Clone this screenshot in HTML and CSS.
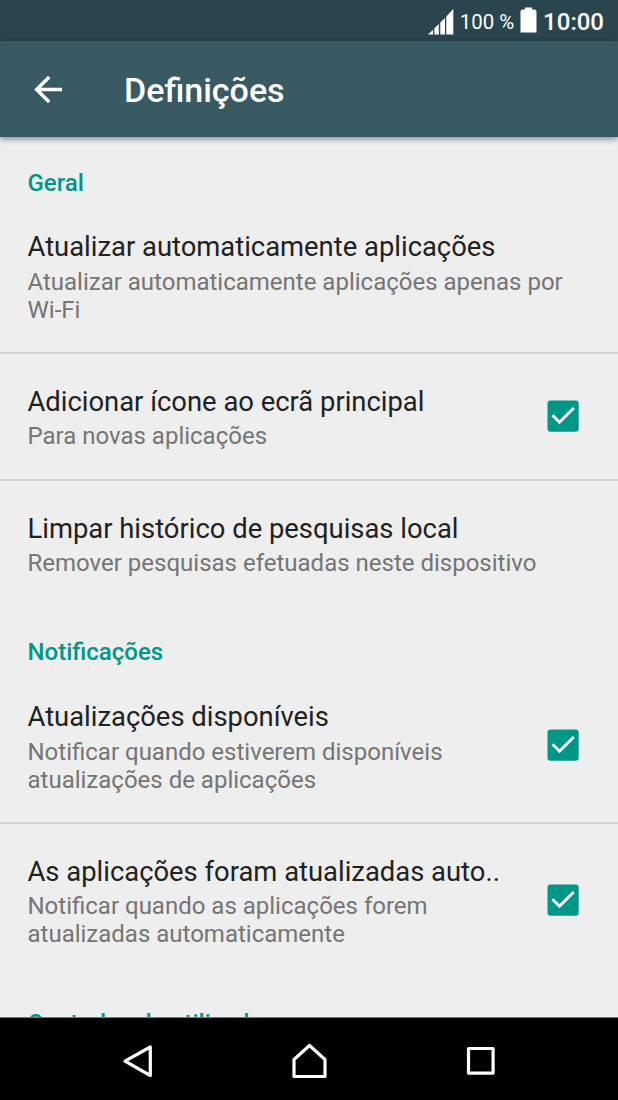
FILE: index.html
```html
<!DOCTYPE html>
<html lang="pt">
<head>
<meta charset="utf-8">
<title>Definições</title>
<link rel="stylesheet" href="styles.css">
</head>
<body>
<div class="screen">
  <div class="status">
    <svg class="signal" width="26" height="26" viewBox="0 0 26 26"><path d="M0 25.500L5 20.800v4.700zM6.300 25.500v-6L10.800 15v10.500zM12.300 25.500v-12L17 9v16.500zM18.300 25.500v-18L25.300 0v25.500z"/></svg>
    <span class="percent">100 %</span>
    <svg class="battery" width="17" height="26" viewBox="0 0 17 26"><path d="M5 .5h7v2h3l1.500 1.500v21.500H0.500V4L2 2.500h3z"/></svg>
    <span class="clock">10:00</span>
  </div>
  <header class="toolbar">
    <svg class="back" width="28" height="28" viewBox="0 0 28 28"><path d="M28 14.500H3M15.200 2L2.700 14.500 15.200 27"/></svg>
    <h1 class="title">Definições</h1>
  </header>
  <main class="content">
    <h2 class="section">Geral</h2>
    <div class="row first"><div class="text"><div class="name">Atualizar automaticamente aplicações</div><div class="desc">Atualizar automaticamente aplicações apenas por<br>Wi-Fi</div></div></div>
    <div class="row ruled"><div class="text"><div class="name">Adicionar ícone ao ecrã principal</div><div class="desc">Para novas aplicações</div></div>
      <svg class="check" width="32" height="32" viewBox="0 0 32 32"><rect x=".5" y=".5" width="31.200" height="31.200" rx="3"/><path d="M5.500 15.200l7 7L26.800 8"/></svg></div>
    <div class="row ruled"><div class="text"><div class="name">Limpar histórico de pesquisas local</div><div class="desc">Remover pesquisas efetuadas neste dispositivo</div></div></div>
    <h2 class="section later">Notificações</h2>
    <div class="row second"><div class="text"><div class="name">Atualizações disponíveis</div><div class="desc">Notificar quando estiverem disponíveis<br>atualizações de aplicações</div></div>
      <svg class="check" width="32" height="32" viewBox="0 0 32 32"><rect x=".5" y=".5" width="31.200" height="31.200" rx="3"/><path d="M5.500 15.200l7 7L26.800 8"/></svg></div>
    <div class="row ruled"><div class="text"><div class="name">As aplicações foram atualizadas auto..</div><div class="desc">Notificar quando as aplicações forem<br>atualizadas automaticamente</div></div>
      <svg class="check" width="32" height="32" viewBox="0 0 32 32"><rect x=".5" y=".5" width="31.200" height="31.200" rx="3"/><path d="M5.500 15.200l7 7L26.800 8"/></svg></div>
    <h2 class="section later">Controlos do utilizador</h2>
  </main>
  <nav class="navbar">
    <svg width="32" height="36" viewBox="0 0 32 36"><path d="M28.300 4v28.500L3 18.200z"/></svg>
    <svg width="36" height="36" viewBox="0 0 36 36"><path d="M2 33.500V16.500L17.500 2.500l15.500 14v17z"/></svg>
    <svg width="30" height="30" viewBox="0 0 30 30"><path d="M2.500 2.500h24.600v24.600h-24.600z"/></svg>
  </nav>
</div>
</body>
</html>
```
FILE: styles.css
```css
* { box-sizing: border-box; }
body { margin: 0; font-family: Roboto, sans-serif; }
.screen { width: 618px; height: 1100px; display: flex; flex-direction: column; overflow: hidden; background: #eee; }
.status { height: 41px; flex: none; background: #2a454e; display: flex; align-items: center; justify-content: flex-end; padding: 1px 14px 0 0; color: #fff; }
.signal, .battery { fill: #fff; }
.signal { margin-top: 1px; }
.battery { margin-bottom: 2px; }
.percent { font-size: 20.400px; margin: 1px 6px 0 6px; }
.clock { font-size: 24px; font-weight: 500; margin: 1px 0 0 6px; }
.toolbar { height: 96px; flex: none; background: #395a63; display: flex; align-items: center; padding-left: 34px; box-shadow: 0 2px 6px rgba(0,0,0,.45); z-index: 1; }
.back { fill: none; stroke: #fff; stroke-width: 3.500; }
.title { margin: 1px 0 0 62px; font-size: 34px; font-weight: 500; color: #fff; }
.content { height: 880px; flex: none; overflow: hidden; }
.section { margin: 0; padding: 32px 27.500px 0; height: 78px; font-size: 24px; line-height: 28px; font-weight: 500; color: #009688; }
.later { height: 79px; }
.row { display: flex; align-items: center; padding: 29px 39px 29px 27.500px; }
.first { padding-top: 14px; padding-bottom: 28px; }
.second { padding-top: 14px; padding-bottom: 28px; }
.check { margin-bottom: 2px; }
.second .check { margin-bottom: 4px; }
.ruled { border-top: 2px solid #d2d2d2; }
.text { flex: 1; white-space: nowrap; }
.name { font-size: 27.400px; line-height: 36px; margin-bottom: 3px; color: #212121; }
.ruled .name { line-height: 38px; margin-bottom: 1px; }
.desc { font-size: 24px; line-height: 28px; color: #757575; }
.check rect { fill: #009688; }
.check path { fill: none; stroke: #fff; stroke-width: 3; }
.navbar { height: 83px; flex: none; background: #000; border-top: 1px solid #777; display: flex; align-items: center; justify-content: space-between; padding: 4px 122px 0 121.500px; z-index: 1; }
.navbar path { fill: none; stroke: #fff; stroke-width: 3.200; stroke-linejoin: round; }
```
